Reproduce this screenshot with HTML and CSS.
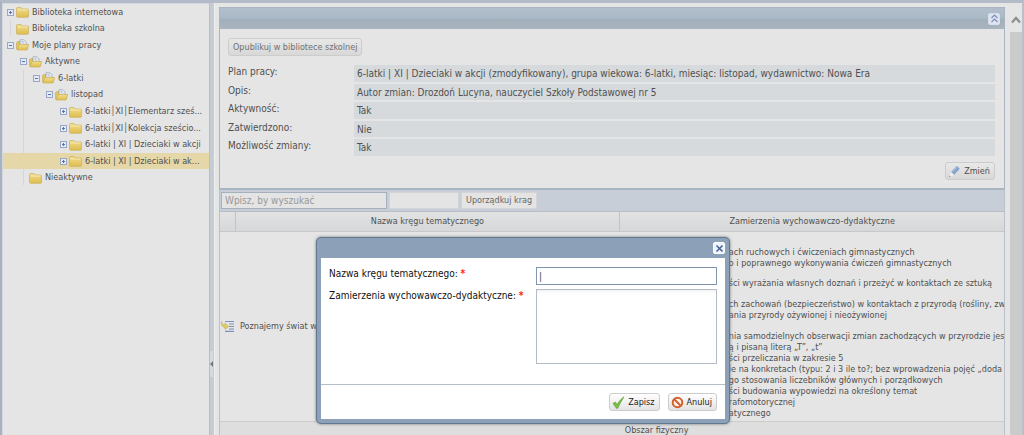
FILE: index.html
```
<!DOCTYPE html>
<html lang="pl">
<head>
<meta charset="utf-8">
<title>Plany pracy</title>
<link rel="stylesheet" href="styles.css">
</head>
<body>
<svg class="defs" aria-hidden="true">
  <defs>
    <linearGradient id="gold" x1="0" y1="0" x2="0" y2="1"><stop offset="0" stop-color="#f0dd8c"/><stop offset="1" stop-color="#dfbd50"/></linearGradient>
    <symbol id="plus" viewBox="0 0 9 9"><rect x="1.5" y="1.5" width="6" height="6" fill="#e4e9f3" stroke="#9aa8c6"/><path d="M3 4.5h3M4.5 3v3" stroke="#5874b0"/></symbol>
    <symbol id="minus" viewBox="0 0 9 9"><rect x="1.5" y="1.5" width="6" height="6" fill="#e4e9f3" stroke="#9aa8c6"/><path d="M3 4.5h3" stroke="#5874b0"/></symbol>
    <symbol id="closed" viewBox="0 0 13 12"><path d="M.5 2.500q0-1 1-1H5l1 1.500h5.500q1 0 1 1v6.500q0 .8-1 .8h-9.500q-1.500 0-1.500-1z" fill="url(#gold)" stroke="#cbb05a" stroke-width=".7"/><path d="M1.500 4h10" stroke="#f6eab4"/></symbol>
    <symbol id="open" viewBox="0 0 13 12"><path d="M.5 10V3.500L2 2.500h2v3h7.500V10z" fill="#e3c660" stroke="#c6a94e" stroke-width=".6"/><path d="M4 .8h4l2 2V7H4z" fill="#edf0f4" stroke="#929dac" stroke-width=".7"/><path d="M5.500 2.500h2M5.500 4h3" stroke="#8ba0c2" stroke-width=".6"/><path d="M3 5.500h9.700L11 11H1z" fill="url(#gold)" stroke="#cbb05a" stroke-width=".7"/></symbol>
  </defs>
</svg>
<div class="app">
  <nav class="side" aria-label="Plany">
    <ul class="tree">
      <li class="row"><svg class="box"><use href="#plus"/></svg><svg class="folder"><use href="#closed"/></svg><span>Biblioteka internetowa</span></li>
      <li class="row"><i class="box line"></i><svg class="folder"><use href="#closed"/></svg><span>Biblioteka szkolna</span></li>
      <li class="row"><svg class="box"><use href="#minus"/></svg><svg class="folder"><use href="#open"/></svg><span>Moje plany pracy</span></li>
      <li class="row l1"><svg class="box"><use href="#minus"/></svg><svg class="folder"><use href="#open"/></svg><span>Aktywne</span></li>
      <li class="row l2 guide"><svg class="box"><use href="#minus"/></svg><svg class="folder"><use href="#open"/></svg><span>6-latki</span></li>
      <li class="row l3 guide"><svg class="box"><use href="#minus"/></svg><svg class="folder"><use href="#open"/></svg><span>listopad</span></li>
      <li class="row l4 guide"><svg class="box"><use href="#plus"/></svg><svg class="folder"><use href="#closed"/></svg><span>6-latki│XI│Elementarz sześ...</span></li>
      <li class="row l4 guide"><svg class="box"><use href="#plus"/></svg><svg class="folder"><use href="#closed"/></svg><span>6-latki│XI│Kolekcja sześcio...</span></li>
      <li class="row l4 guide"><svg class="box"><use href="#plus"/></svg><svg class="folder"><use href="#closed"/></svg><span>6-latki | XI | Dzieciaki w akcji</span></li>
      <li class="row l4 guide selected"><svg class="box"><use href="#plus"/></svg><svg class="folder"><use href="#closed"/></svg><span>6-latki | XI | Dzieciaki w ak...</span></li>
      <li class="row l1"><i class="box line"></i><svg class="folder"><use href="#closed"/></svg><span>Nieaktywne</span></li>
    </ul>
  </nav>
  <div class="splitter"><span class="grip"><svg width="3" height="6" viewBox="0 0 3 6"><path d="M3 0v6L0 3z" fill="#777"/></svg></span></div>
  <main class="main">
    <section class="panel">
      <header class="panel-head">
        <button class="tool" aria-label="Zwiń"><svg width="11" height="11" viewBox="0 0 11 11"><path d="M2.500 5l3-3 3 3M2.500 9l3-3 3 3" fill="none" stroke="#7a8fb8" stroke-width="1.200"/></svg></button>
      </header>
      <div class="panel-body">
        <button class="btn publish">Opublikuj w bibliotece szkolnej</button>
        <dl class="details">
          <dt>Plan pracy:</dt><dd>6-latki | XI | Dzieciaki w akcji (zmodyfikowany), grupa wiekowa: 6-latki, miesiąc: listopad, wydawnictwo: Nowa Era</dd>
          <dt>Opis:</dt><dd>Autor zmian: Drozdoń Lucyna, nauczyciel Szkoły Podstawowej nr 5</dd>
          <dt>Aktywność:</dt><dd>Tak</dd>
          <dt>Zatwierdzono:</dt><dd>Nie</dd>
          <dt>Możliwość zmiany:</dt><dd>Tak</dd>
        </dl>
        <button class="btn with-icon change"><svg width="13" height="13" viewBox="0 0 13 13"><path d="M3 7L8 1.500q.8-.7 1.600 0l1.600 1.500q.7.8 0 1.600L6 10z" fill="#87a5cb"/><path d="M4.500 6.500L9 2" stroke="#b6cbe3"/><path d="M3 7l3 3-4.500 1.500z" fill="#f1f1ef"/><circle cx="1.500" cy="11.500" r=".7" fill="#999"/></svg>Zmień</button>
      </div>
    </section>
    <section class="grid">
      <div class="toolbar">
        <input class="search" type="text" placeholder="Wpisz, by wyszukać" aria-label="Wyszukaj">
        <input class="short" type="text" aria-label="Filtr">
        <button class="arrange">Uporządkuj krag</button>
      </div>
      <table>
        <colgroup><col class="c-icon"><col><col class="c-goal"></colgroup>
        <thead><tr><th></th><th>Nazwa kręgu tematycznego</th><th>Zamierzenia wychowawczo-dydaktyczne</th></tr></thead>
        <tbody>
          <tr class="entry">
            <td class="icon"><svg width="13" height="12" viewBox="0 0 13 12"><path d="M4 1.500h9M8 4h5M8 6.500h5M8 9h5M4 11.300h9" stroke="#7f92ba" stroke-width="1.200"/><path d="M.5 1.500q0 3.500 3.500 3.500V3l3.500 3.500L4 9.500V7.500Q0 7 .5 1.500z" fill="#e2cf57" stroke="#b9a545" stroke-width=".5"/></svg></td>
            <td class="name">Poznajemy świat w</td>
            <td class="goals">
              <div class="lines">
                <p>ach ruchowych i ćwiczeniach gimnastycznych</p>
                <p>o i poprawnego wykonywania ćwiczeń gimnastycznych</p>
                <p></p>
                <p>ści wyrażania własnych doznań i przeżyć w kontaktach ze sztuką</p>
                <p></p>
                <p>ch zachowań (bezpieczeństwo) w kontaktach z przyrodą (rośliny, zwi</p>
                <p>ania przyrody ożywionej i nieożywionej</p>
                <p></p>
                <p>nia samodzielnych obserwacji zmian zachodzących w przyrodzie jesie</p>
                <p>ą i pisaną literą „T”, „t”</p>
                <p>ści przeliczania w zakresie 5</p>
                <p>ie na konkretach (typu: 2 i 3 ile to?; bez wprowadzenia pojęć „doda</p>
                <p>go stosowania liczebników głównych i porządkowych</p>
                <p>ści budowania wypowiedzi na określony temat</p>
                <p>rafomotorycznej</p>
                <p>atycznego</p>
              </div>
            </td>
          </tr>
          <tr class="alt"><td></td><td></td><td>Obszar fizyczny</td></tr>
        </tbody>
      </table>
    </section>
  </main>
  <div class="scroll"><svg width="12" height="10" viewBox="0 0 12 10"><path d="M2 7.500l4-4.500 4 4.500" fill="none" stroke="#8d8d8d" stroke-width="2.200"/></svg><span class="thumb"></span></div>
</div>

<form class="dialog" role="dialog" aria-label="Krąg tematyczny">
  <header class="dialog-head"><button type="button" class="tool close" aria-label="Zamknij"><svg width="11" height="11" viewBox="0 0 11 11"><path d="M2.500 2.500l6 6M8.500 2.500l-6 6" stroke="#3e5f9c" stroke-width="1.500"/></svg></button></header>
  <div class="dialog-body">
    <div class="fields">
      <label for="name">Nazwa kręgu tematycznego: <b>*</b></label>
      <input id="name" type="text" value="|">
      <label for="goal">Zamierzenia wychowawczo-dydaktyczne: <b>*</b></label>
      <textarea id="goal"></textarea>
    </div>
    <footer class="actions">
      <button type="button" class="btn with-icon"><svg width="13" height="13" viewBox="0 0 13 13"><path d="M1 7.500l2.300-1.500L5 8.500Q8 3.500 12 .8 8.500 6 5.700 12.300H4.500z" fill="#7cc243" stroke="#52942c" stroke-width=".6"/></svg>Zapisz</button>
      <button type="button" class="btn with-icon"><svg width="13" height="13" viewBox="0 0 13 13"><circle cx="6.500" cy="6.500" r="4.800" fill="#fff1e8" stroke="#d3622e" stroke-width="2"/><path d="M3 3l7 7" stroke="#d3622e" stroke-width="2"/></svg>Anuluj</button>
    </footer>
  </div>
</form>
</body>
</html>
```
FILE: styles.css
```
* { box-sizing: border-box; }
body { margin: 0; height: 100vh; overflow: hidden; background: #e5e5e5; color: #505050; font: 10px/13px "DejaVu Sans Condensed", "Noto Sans", sans-serif; }
button, input, textarea { font: inherit; color: inherit; margin: 0; border-radius: 0; outline: 0; }
p, dl, dd, ul { margin: 0; padding: 0; }
.defs { position: absolute; width: 0; height: 0; }
.app { display: flex; height: 100vh; border-top: 3px solid #b2bbc7; border-left: 2px solid #a9b2be; border-right: 2px solid #b9c0ca; }
.side { width: 207px; flex: none; border: 1px solid #d2d8df; border-width: 1px 0 0 1px; font-size: 9px; }
.tree { display: grid; grid-auto-rows: 1fr; height: 182px; list-style: none; }
.row { display: flex; align-items: center; white-space: nowrap; padding-left: 3px; }
.l1 { padding-left: 16px; }
.l2 { padding-left: 29px; }
.l3 { padding-left: 42px; }
.l4 { padding-left: 56px; }
.guide { background: linear-gradient(#d3d6da, #d3d6da) 20px 0 / 1px 100% no-repeat; }
.selected { background-color: #e5d7a7; background-image: none; }
.box { width: 9px; height: 9px; margin-right: 1px; flex: none; }
.line { position: relative; }
.line::before { content: ""; position: absolute; left: 4px; top: -4px; height: 16px; border-left: 1px solid #d3d6da; }
.folder { width: 13px; height: 12px; margin-right: 3px; flex: none; }
.splitter { width: 5px; flex: none; background: #c5ccd4; border-left: 1px solid #b5bec9; display: flex; align-items: flex-end; padding-bottom: 58px; }
.grip { height: 26px; display: flex; align-items: center; background: #d5dade; }
.main { flex: 1; min-width: 0; padding: 4px 4px 0 4px; border-left: 1px solid #f0f0f0; overflow: hidden; }
.panel { border: 1px solid #a9b5c1; border-bottom-width: 2px; }
.panel-head { height: 21px; display: flex; align-items: center; justify-content: flex-end; padding-right: 4px; background: linear-gradient(#b1bfcc, #abbac8 48%, #a2b0bc 52%, #a8b4be); }
.tool { width: 12px; height: 12px; padding: 0; border: 1px solid #d6deee; border-radius: 2px; background: #dde4f0; display: flex; align-items: center; justify-content: center; }
.tool svg { flex: none; }
.panel-body { padding: 9px 9px 8px 8px; display: flex; flex-direction: column; align-items: flex-start; }
.btn { height: 18px; padding: 0 4px; display: flex; align-items: center; gap: 3px; border: 1px solid #ccc; border-radius: 3px; background: linear-gradient(#e8e8e8, #d8d8d8); font-size: 9px; white-space: nowrap; }
.with-icon { padding-left: 2px; }
.publish { color: #707070; }
.details { align-self: stretch; display: grid; grid-template-columns: 126px 1fr; grid-auto-rows: 1fr; row-gap: 2px; height: 91px; margin-top: 9px; margin-bottom: 1px; line-height: 17px; }
.details dt { line-height: 13px; }
.details dd { background: #d6dadd; padding-left: 3px; white-space: nowrap; overflow: hidden; }
.change { align-self: flex-end; margin-top: 5px; }
.grid { border-left: 1px solid #b9c0c9; border-right: 1px solid #b9c0c9; font-size: 9px; }
.toolbar { height: 22px; display: flex; align-items: center; gap: 2px; padding-left: 1px; background: #c8ced7; border-bottom: 1px solid #b6bdc6; }
.toolbar input, .arrange { height: 17px; border: 1px solid #d2d4d7; background: #e4e4e4; padding: 0 3px; }
.toolbar .search { width: 166px; border-color: #a5b1be; font-size: 10px; }
.search::placeholder { color: #999; opacity: 1; }
.short { width: 70px; }
.toolbar .arrange { padding: 0 4px; color: #666; white-space: nowrap; }
table { width: 100%; table-layout: fixed; border-collapse: collapse; }
.c-icon { width: 15px; }
.c-goal { width: 49%; }
th { height: 19px; padding: 0; font-weight: normal; background: linear-gradient(#e2e2e2, #d5d7d9); border-right: 1px solid #c0c3c7; border-bottom: 1px solid #c8c8c8; }
th:last-child { border-right: 0; }
td { padding: 2px 5px; overflow: hidden; white-space: nowrap; }
.entry { border-bottom: 1px solid #ccc; }
td.icon { padding: 0 1px; }
td.icon svg { display: block; }
td.goals { padding: 15px 0 2px 109px; vertical-align: top; }
.lines { display: grid; grid-auto-rows: 1fr; height: 172px; line-height: 11px; }
.alt { background: #dedede; }
.scroll { width: 13px; flex: none; display: flex; flex-direction: column; align-items: center; padding-top: 12px; }
.thumb { flex: 1; width: 12px; margin-top: 7px; background: #cbcbcb; }
.dialog { position: absolute; left: 316px; top: 237px; width: 414px; padding: 0 4px 4px; border: 1px solid #607991; border-radius: 5px; background: #8ca1b8; color: #111; box-shadow: 0 0 3px #777; }
.dialog-head { height: 20px; display: flex; align-items: center; justify-content: flex-end; }
.close { background: #eef3fc; border-color: #fff; }
.dialog-body { background: #fff; }
.fields { display: grid; grid-template-columns: 1fr 181px; gap: 4px; padding: 9px 8px 20px; }
.fields label { white-space: nowrap; }
.fields b { color: #f22; }
.fields input { height: 18px; padding: 0 2px; border: 1px solid #8197ad; color: #345; }
.fields textarea { height: 75px; border: 1px solid #b3bcc5; resize: none; display: block; background: linear-gradient(#f3f3f3, #fff 4px); }
.actions { display: flex; justify-content: flex-end; gap: 8px; padding: 8px; border-top: 1px solid #b5bec7; }
.actions .btn { background: linear-gradient(#fff, #e3e3e3); color: #222; }
```
